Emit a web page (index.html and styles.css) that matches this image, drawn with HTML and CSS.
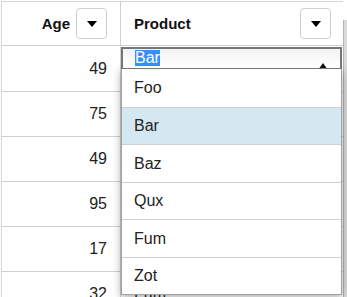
FILE: index.html
```html
<!DOCTYPE html>
<html>

<head>
  <title>Grid filter</title>
  <link rel="stylesheet" href="styles.css">
</head>

<body>
  <div class="page">
    <div class="grid">
      <div class="cell head age">
        <span class="label">Age</span>
        <button class="filter"><span class="caret"></span></button>
      </div>
      <div class="cell head product">
        <span class="label">Product</span>
        <button class="filter"><span class="caret"></span></button>
      </div>

      <!-- product cells of the first rows sit under the open editor -->
      <div class="cell num">49</div><div class="cell text"></div>
      <div class="cell num">75</div><div class="cell text"></div>
      <div class="cell num">49</div><div class="cell text"></div>
      <div class="cell num">95</div><div class="cell text"></div>
      <div class="cell num">17</div><div class="cell text"></div>
      <div class="cell num">32</div><div class="cell text">Fum</div>
    </div>
    <div class="scroll"></div>

    <!-- open product editor, lies over the grid -->
    <div class="picker">
      <div class="select">
        <span class="picked">Bar</span>
        <span class="arrow"></span>
      </div>
      <ul class="options">
        <li>Foo</li>
        <li class="active">Bar</li>
        <li>Baz</li>
        <li>Qux</li>
        <li>Fum</li>
        <li>Zot</li>
      </ul>
    </div>
  </div>
</body>

</html>
```

FILE: styles.css
```css
body, html {
  margin: 0;
  padding: 0;
}

body {
  background: #fff;
  font-family: "Liberation Sans", Arial, sans-serif;
  color: #222;
  overflow: hidden;
}

* {box-sizing: border-box;}

.page {
  position: relative;
  display: flex;
  height: 297px;
  overflow: hidden;
  padding: 1px 0 0 1px;
}

.grid {
  width: 342px;
  display: grid;
  grid-template-columns: 119px 222px;
  grid-auto-rows: 45px;
  border-top: 1px solid #d6d6d6;
  border-left: 1px solid #d6d6d6;
}

.cell {
  display: flex;
  align-items: center;
  border-bottom: 1px solid #cfcfcf;
  font-size: 16px;
}

.cell:nth-child(odd) {border-right: 1px solid #cfcfcf;}

.head {
  height: 44px;
  font-size: 15px;
  font-weight: bold;
  color: #111;
}

.age {
  justify-content: flex-end;
  gap: 6px;
  padding-right: 13px;
}

.product {
  justify-content: space-between;
  padding: 0 12px 0 13px;
}

.num {
  justify-content: flex-end;
  padding-right: 13px;
}

.text {padding-left: 13px;}

.filter {
  width: 31px;
  height: 31px;
  padding: 0;
  margin: 0;
  display: flex;
  align-items: center;
  justify-content: center;
  background: #fff;
  border: 1px solid #cfcfcf;
  border-radius: 4px;
}

.caret {
  width: 0;
  height: 0;
  border-left: 5px solid transparent;
  border-right: 5px solid transparent;
  border-top: 6px solid #000;
}

.scroll {
  width: 5px;
  margin-top: 19px;
  height: 277px;
  background: #dadada;
  border-left: 1px solid #b4b4b4;
}

/* Editor popup */
.picker {
  position: absolute;
  top: 47px;
  left: 121px;
  width: 221px;
}

.select {
  position: relative;
  height: 22px;
  overflow: hidden;
  border: 2px solid #767676;
  border-bottom-width: 1px;
  background: linear-gradient(#f3f3f3, #fff);
  padding: 1px 0 0 12px;
}

.picked {
  display: inline-block;
  height: 16px;
  line-height: 16px;
  font-size: 16px;
  color: #fff;
  background: #3390ff;
  vertical-align: top;
}

.arrow {
  position: absolute;
  top: 14px;
  left: 195px;
  width: 0;
  height: 0;
  border-left: 5px solid transparent;
  border-right: 5px solid transparent;
  border-bottom: 7px solid #111;
}

.options {
  list-style: none;
  margin: 0;
  padding: 0;
  background: #fff;
  border: 1px solid #a0a0a0;
  border-top: 0;
  box-shadow: 0 2px 8px rgba(0, 0, 0, 0.35);
}

.options li {
  display: flex;
  align-items: center;
  height: 38px;
  padding-left: 12px;
  font-size: 16px;
  color: #222;
}

.options li + li {border-top: 1px solid #cfcfcf;}
.options li:nth-child(even) {height: 37px;}

.options .active {background: #d4e8f1;}
```
